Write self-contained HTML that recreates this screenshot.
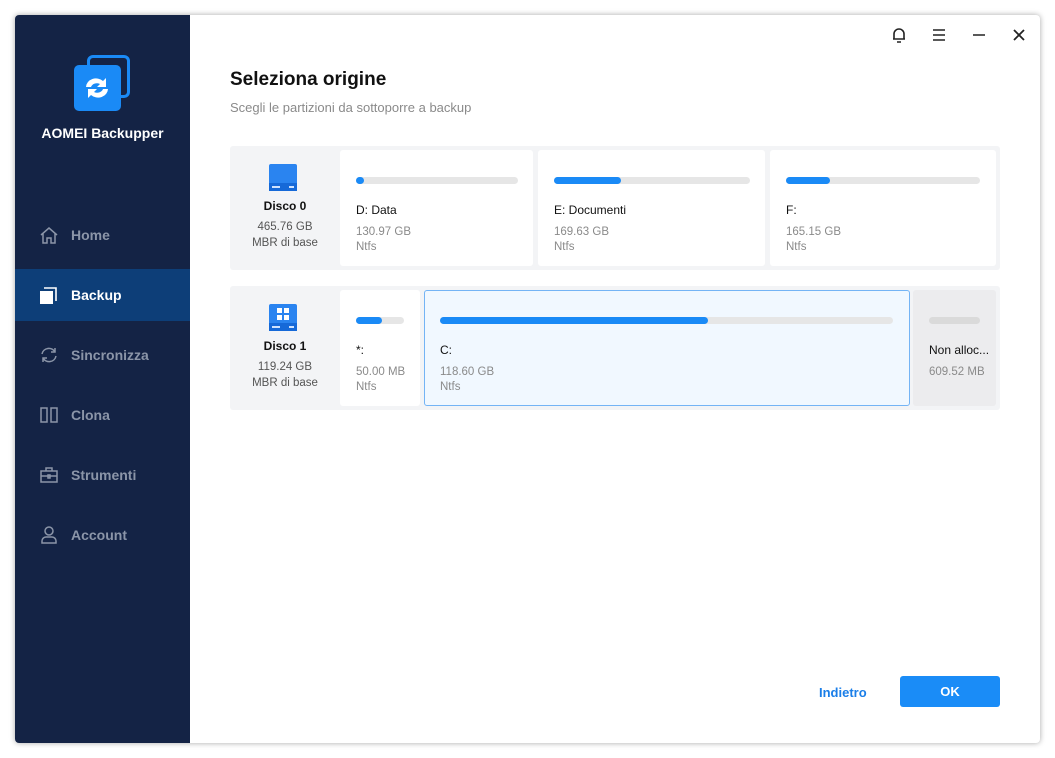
<!DOCTYPE html>
<html><head><meta charset="utf-8"><style>
*{box-sizing:border-box;margin:0;padding:0}
body{width:1055px;height:758px;background:#fff;font-family:"Liberation Sans",sans-serif;position:relative;overflow:hidden}
.win{position:absolute;left:15px;top:15px;width:1025px;height:728px;background:#fff;box-shadow:0 0 6px rgba(0,0,0,.35);border-radius:4px;overflow:hidden}
.side{position:absolute;left:0;top:0;width:175px;height:728px;background:#142345}
.abs{position:absolute}
.nav{position:absolute;left:0;width:175px;height:52px;color:#8b95a8;font-size:14px;font-weight:bold}
.nav span{position:absolute;left:56px;top:18px}
.nav svg{position:absolute;left:24px;top:16px}
.row{position:absolute;left:215px;width:770px;height:124px;background:#f3f4f6;border-radius:3px}
.card{position:absolute;top:4px;height:116px;background:#fff;border-radius:3px}
.bar{position:absolute;left:16px;top:27px;height:7px;border-radius:4px;background:#e6e6e6}
.fill{position:absolute;left:0;top:0;height:7px;border-radius:4px;background:#1a8af6}
.nm{position:absolute;left:16px;top:53px;font-size:12px;color:#111}
.sz{position:absolute;left:16px;top:75px;font-size:11.5px;color:#8a8a8a;line-height:15px}
.disk{position:absolute;left:0;top:0;width:110px;text-align:center;font-size:11.5px;color:#555;line-height:16px}
.disk b{color:#111;font-size:12px;display:block;margin-bottom:5px}
</style></head><body>
<div class="win">
<div class="side">
 <div class="abs" style="left:72px;top:40px;width:43px;height:43px;border:3px solid #1a8af6;border-radius:6px"></div>
 <div class="abs" style="left:59px;top:50px;width:47px;height:46px;background:#1a8af6;border-radius:5px"></div>
 <svg class="abs" style="left:66px;top:58px" width="32" height="30" viewBox="0 0 32 30"><path d="M5 14a10 9 0 0 1 17-6l3-3v9h-9l3-3a6 5 0 0 0-9 3z" fill="#fff"/><path d="M27 16a10 9 0 0 1-17 6l-3 3v-9h9l-3 3a6 5 0 0 0 9-3z" fill="#fff"/></svg>
 <div class="abs" style="left:0;top:110px;width:175px;text-align:center;color:#fff;font-weight:bold;font-size:14px">AOMEI Backupper</div>
 <div class="nav" style="top:194px"><svg width="20" height="20" viewBox="0 0 20 20" fill="none" stroke="#8b95a8" stroke-width="1.5"><path d="M2 10L10 3l8 7M4 8v10h4v-5h4v5h4V8"/></svg><span>Home</span></div>
 <div class="nav" style="top:254px;background:#0d3e78;color:#fff"><svg width="20" height="20" viewBox="0 0 20 20"><rect x="1" y="6" width="13" height="13" fill="#fff"/><path d="M5 3h12v13" stroke="#fff" stroke-width="1.6" fill="none"/></svg><span>Backup</span></div>
 <div class="nav" style="top:314px"><svg width="20" height="20" viewBox="0 0 20 20" fill="none" stroke="#8b95a8" stroke-width="1.5"><path d="M3 9a7 7 0 0 1 13-2M17 11a7 7 0 0 1-13 2M16 3v4h-4M4 17v-4h4"/></svg><span>Sincronizza</span></div>
 <div class="nav" style="top:374px"><svg width="20" height="20" viewBox="0 0 20 20" fill="none" stroke="#8b95a8" stroke-width="1.5"><rect x="2" y="3" width="6" height="14"/><rect x="12" y="3" width="6" height="14"/></svg><span>Clona</span></div>
 <div class="nav" style="top:434px"><svg width="20" height="20" viewBox="0 0 20 20" fill="none" stroke="#8b95a8" stroke-width="1.5"><rect x="2" y="6" width="16" height="11"/><path d="M7 6V3h6v3M2 11h16"/><rect x="9" y="10" width="2" height="3"/></svg><span>Strumenti</span></div>
 <div class="nav" style="top:494px"><svg width="20" height="20" viewBox="0 0 20 20" fill="none" stroke="#8b95a8" stroke-width="1.5"><circle cx="10" cy="6" r="4"/><path d="M3 18v-2a4 4 0 0 1 4-4h6a4 4 0 0 1 4 4v2z"/></svg><span>Account</span></div>
</div>
<svg class="abs" style="left:877px;top:12px" width="14" height="16" viewBox="0 0 14 16" fill="none" stroke="#222" stroke-width="1.6"><path d="M2 12V7a5 5 0 0 1 10 0v5zM1 12h12M5 15h4"/></svg>
<svg class="abs" style="left:917px;top:13px" width="14" height="14"><path d="M1 2h12M1 7h12M1 12h12" stroke="#222" stroke-width="1.6"/></svg>
<svg class="abs" style="left:957px;top:13px" width="14" height="14"><path d="M1 7h12" stroke="#222" stroke-width="1.6"/></svg>
<svg class="abs" style="left:997px;top:13px" width="14" height="14"><path d="M2 2l10 10M12 2L2 12" stroke="#222" stroke-width="1.8"/></svg>
<div class="abs" style="left:215px;top:54px;font-size:19px;font-weight:bold;color:#111">Seleziona origine</div>
<div class="abs" style="left:215px;top:85px;font-size:13px;color:#8a8a8a">Scegli le partizioni da sottoporre a backup</div>

<div class="row" style="top:131px">
 <svg class="abs" style="left:38px;top:17px" width="30" height="30" viewBox="0 0 30 30"><rect x="1" y="1" width="28" height="27" rx="2" fill="#2a84f0"/><rect x="1" y="20" width="28" height="8" fill="#1669d8"/><path d="M4 24h8M21 24h5" stroke="#cfe3ff" stroke-width="2"/></svg>
 <div class="disk" style="top:52px"><b>Disco 0</b>465.76 GB<br>MBR di base</div>
 <div class="card" style="left:110px;width:193px"><div class="bar" style="width:162px"><div class="fill" style="width:8px"></div></div><div class="nm">D: Data</div><div class="sz">130.97 GB<br>Ntfs</div></div>
 <div class="card" style="left:308px;width:227px"><div class="bar" style="width:196px"><div class="fill" style="width:67px"></div></div><div class="nm">E: Documenti</div><div class="sz">169.63 GB<br>Ntfs</div></div>
 <div class="card" style="left:540px;width:226px"><div class="bar" style="width:194px"><div class="fill" style="width:44px"></div></div><div class="nm">F:</div><div class="sz">165.15 GB<br>Ntfs</div></div>
</div>

<div class="row" style="top:271px">
 <svg class="abs" style="left:38px;top:17px" width="30" height="30" viewBox="0 0 30 30"><rect x="1" y="1" width="28" height="27" rx="2" fill="#2a84f0"/><rect x="1" y="20" width="28" height="8" fill="#1669d8"/><path d="M4 24h8M21 24h5" stroke="#cfe3ff" stroke-width="2"/><rect x="9" y="5" width="5" height="5" fill="#fff"/><rect x="16" y="5" width="5" height="5" fill="#fff"/><rect x="9" y="12" width="5" height="5" fill="#fff"/><rect x="16" y="12" width="5" height="5" fill="#fff"/></svg>
 <div class="disk" style="top:52px"><b>Disco 1</b>119.24 GB<br>MBR di base</div>
 <div class="card" style="left:110px;width:80px"><div class="bar" style="width:48px"><div class="fill" style="width:26px"></div></div><div class="nm">*:</div><div class="sz">50.00 MB<br>Ntfs</div></div>
 <div class="card" style="left:194px;width:486px;background:#f1f8ff;border:1.5px solid #74b4f5"><div class="bar" style="width:453px;left:15px;top:26px"><div class="fill" style="width:268px"></div></div><div class="nm" style="left:15px;top:52px">C:</div><div class="sz" style="left:15px;top:74px">118.60 GB<br>Ntfs</div></div>
 <div class="card" style="left:683px;width:83px;background:#ececee"><div class="bar" style="width:51px;background:#dadada"></div><div class="nm">Non alloc...</div><div class="sz">609.52 MB</div></div>
</div>

<div class="abs" style="left:804px;top:670px;font-size:13px;font-weight:bold;color:#1a7ee8">Indietro</div>
<div class="abs" style="left:885px;top:661px;width:100px;height:31px;background:#1a8cf7;border-radius:3px;color:#fff;font-weight:bold;font-size:13px;text-align:center;line-height:31px">OK</div>
</div>
</body></html>
